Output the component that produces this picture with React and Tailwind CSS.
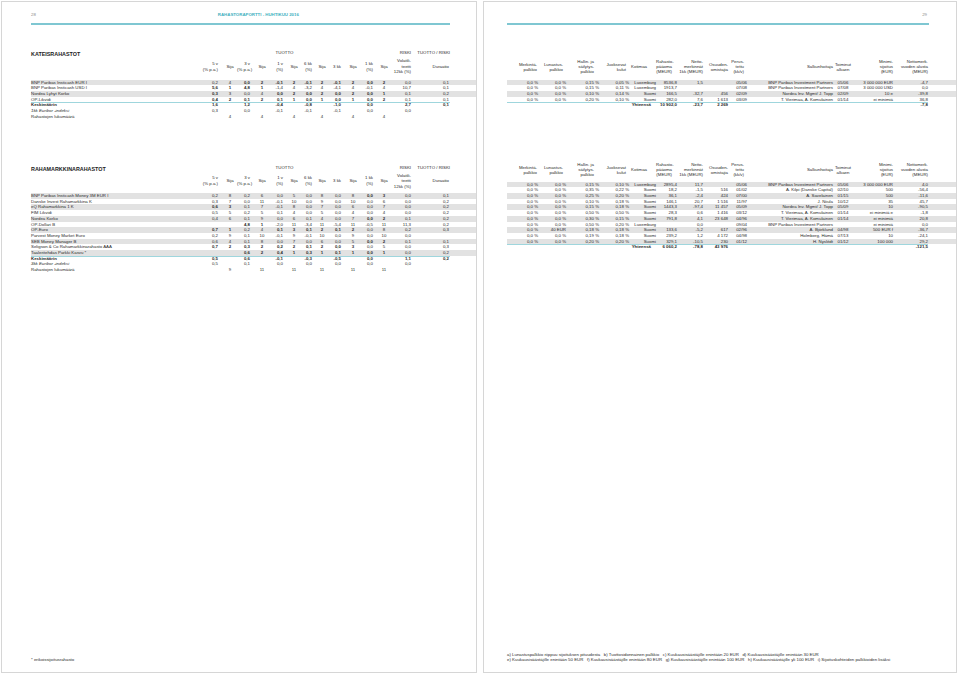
const L_GRID =
  'grid grid-cols-[171px_21px_14px_18px_14px_19px_12px_17px_10px_19px_14px_18px_12px_26px_34px]'
const R_GRID =
  'grid grid-cols-[31px_28px_33px_30px_27px_21px_26px_25px_19px_86px_20px_40px_35px]'

const Val = ({ v, className }) => {
  const bold = typeof v === 'string' && v.startsWith('*')
  const text = bold ? v.slice(1) : v
  return <div className={`${className} ${bold ? 'font-bold' : ''} whitespace-nowrap`}>{text}</div>
}

const fundsKateis = [
  ['BNP Paribas Insticash EUR I', '0,2', '4', '*0,0', '*2', '*-0,1', '*2', '*-0,1', '*2', '*-0,1', '*2', '*0,0', '*2', '0,0', '0,1'],
  ['BNP Paribas Insticash USD I', '*5,6', '*1', '*4,8', '*1', '-1,4', '4', '-3,2', '4', '-4,1', '4', '-0,1', '4', '10,7', '0,1'],
  ['Nordea Lyhyt Korko', '*0,3', '3', '0,0', '4', '*0,0', '*2', '*0,0', '*2', '*0,0', '*2', '*0,0', '*1', '0,1', '0,2'],
  ['OP-Likvidi', '*0,4', '*2', '*0,1', '*2', '*0,1', '*1', '*0,0', '*1', '*0,0', '*1', '*0,0', '*2', '0,1', '0,1'],
]
const sumKateis = [
  ['*Keskimäärin', '*1,6', '', '*1,2', '', '*-0,4', '', '*-0,8', '', '*-1,0', '', '*0,0', '', '*2,7', '*0,1'],
  ['1kk Euribor -indeksi', '0,3', '', '0,0', '', '-0,1', '', '-0,1', '', '-0,1', '', '0,0', '', '0,0', ''],
  ['Rahastojen lukumäärä', '', '4', '', '4', '', '4', '', '4', '', '4', '', '4', '', ''],
]

const fundsRaha = [
  ['BNP Paribas Insticash Money 3M EUR I', '0,2', '8', '0,2', '6', '0,0', '5', '0,0', '8', '0,0', '8', '*0,0', '*3', '0,0', '0,1'],
  ['Danske Invest Rahamarkkina K', '0,3', '7', '0,0', '11', '-0,1', '10', '0,0', '9', '0,0', '10', '0,0', '6', '0,0', '0,2'],
  ['eQ Rahamarkkina 1 K', '*0,6', '*3', '0,1', '7', '-0,1', '8', '0,0', '7', '0,0', '6', '0,0', '7', '0,0', '0,2'],
  ['FIM Likvidi', '0,5', '5', '0,2', '5', '0,1', '4', '0,0', '5', '0,0', '4', '0,0', '4', '0,0', '0,2'],
  ['Nordea Korko', '0,4', '6', '0,1', '9', '0,0', '6', '0,1', '4', '0,0', '7', '*0,0', '*2', '0,1', '0,2'],
  ['OP-Dollari B', '', '', '*4,8', '*1', '-2,0', '11', '-3,4', '11', '-5,4', '11', '-0,5', '11', '11,3', '0,2'],
  ['OP-Euro', '*0,7', '*1', '0,2', '4', '*0,1', '*3', '*0,1', '*2', '*0,1', '*2', '0,0', '8', '0,2', '0,3'],
  ['Parvest Money Market Euro', '0,2', '9', '0,1', '10', '-0,1', '9', '-0,1', '10', '0,0', '9', '0,0', '10', '0,0', ''],
  ['SEB Money Manager B', '0,6', '4', '0,1', '8', '0,0', '7', '0,0', '6', '0,0', '5', '*0,0', '*2', '0,1', '0,1'],
  ['Seligson & Co Rahamarkkinarahasto AAA', '*0,7', '*2', '*0,3', '*2', '*0,2', '*2', '*0,1', '*2', '*0,0', '*3', '0,0', '5', '0,0', '0,3'],
  ['Taaleritehdas Parkki Kasvu *', '', '', '*0,6', '*2', '*0,4', '*1', '*0,3', '*1', '*0,1', '*1', '*0,0', '*1', '0,0', '0,2'],
]
const sumRaha = [
  ['*Keskimäärin', '*0,5', '', '*0,6', '', '*-0,1', '', '*-0,3', '', '*-0,5', '', '*0,0', '', '*1,1', '*0,2'],
  ['3kk Euribor -indeksi', '0,5', '', '0,1', '', '0,0', '', '0,0', '', '0,0', '', '0,0', '', '0,0', ''],
  ['Rahastojen lukumäärä', '', '9', '', '11', '', '11', '', '11', '', '11', '', '11', '', ''],
]

const infoKateis = [
  ['0,0 %', '0,0 %', '0,15 %', '0,05 %', 'Luxemburg', '8536,8', '1,5', '', '05/06', 'BNP Paribas Investment Partners', '05/06', '3 000 000 EUR', '-4,7'],
  ['0,0 %', '0,0 %', '0,15 %', '0,11 %', 'Luxemburg', '1913,7', '', '', '07/08', 'BNP Paribas Investment Partners', '07/08', '3 000 000 USD', '0,0'],
  ['0,0 %', '0,0 %', '0,10 %', '0,14 %', 'Suomi', '166,5', '-32,7', '456', '02/09', 'Nordea Inv. Mgmt/ J. Topp', '02/09', '10 e', '-39,8'],
  ['0,0 %', '0,0 %', '0,20 %', '0,10 %', 'Suomi', '282,0', '7,6', '1 613', '03/09', 'T. Vierimaa, A. Komulainen', '01/14', 'ei minimiä', '36,8'],
]
const totKateis = ['', '', '', '', '*Yhteensä', '*10 902,0', '*-23,7', '*2 269', '', '', '', '', '*-7,8']

const infoRaha = [
  ['0,0 %', '0,0 %', '0,15 %', '0,10 %', 'Luxemburg', '2895,4', '11,7', '', '05/06', 'BNP Paribas Investment Partners', '05/06', '3 000 000 EUR', '4,0'],
  ['0,0 %', '0,0 %', '0,35 %', '0,22 %', 'Suomi', '18,2', '-1,5', '516', '01/02', 'A. Kilpi (Danske Capital)', '02/10', '500', '-56,4'],
  ['0,0 %', '0,0 %', '0,25 %', '0,20 %', 'Suomi', '36,1', '-2,4', '424', '07/00', 'A. Savelainen', '01/15', '500', '-11,6'],
  ['0,0 %', '0,0 %', '0,10 %', '0,18 %', 'Suomi', '146,1', '20,7', '1 516', '11/97', 'J. Niiula', '10/12', '35', '45,7'],
  ['0,0 %', '0,0 %', '0,15 %', '0,18 %', 'Suomi', '1443,3', '-97,4', '11 457', '05/09', 'Nordea Inv. Mgmt/ J. Topp', '05/09', '10', '-90,5'],
  ['0,0 %', '0,0 %', '0,50 %', '0,50 %', 'Suomi', '28,3', '0,6', '1 416', '03/12', 'T. Vierimaa, A. Komulainen', '01/14', 'ei minimiä e', '-1,8'],
  ['0,0 %', '0,0 %', '0,30 %', '0,15 %', 'Suomi', '791,8', '4,1', '23 648', '04/96', 'T. Vierimaa, A. Komulainen', '01/14', 'ei minimiä', '20,8'],
  ['0,0 %', '0,0 %', '0,50 %', '0,20 %', 'Luxemburg', '', '0,0', '', '09/04', 'BNP Paribas Investment Partners', '', 'ei minimiä', '0,0'],
  ['0,0 %', '40 EUR', '0,18 %', '0,18 %', 'Suomi', '133,6', '-5,2', '617', '02/96', 'A. Björklund', '04/98', '500 EUR f', '-36,7'],
  ['0,0 %', '0,0 %', '0,19 %', '0,18 %', 'Suomi', '239,2', '1,2', '4 172', '04/98', 'Holmberg, Hämä', '07/13', '10', '-24,1'],
  ['0,0 %', '0,0 %', '0,20 %', '0,20 %', 'Suomi', '329,1', '-10,5', '230', '01/12', 'H. Nyslédt', '01/12', '100 000', '29,2'],
]
const totRaha = ['', '', '', '', '*Yhteensä', '*6 060,2', '*-78,8', '*43 976', '', '', '', '', '*-121,5']

const lCell = (i) => {
  if (i === 0) return 'text-left'
  if (i === 14) return 'text-right pr-[1px]'
  if (i === 13) return 'text-right pr-[5px]'
  return i % 2 === 1 ? 'text-right pr-[5px]' : 'text-center'
}

const lHeads = [
  [], ['5 v', '(% p.a.)'], ['Sija'], ['3 v', '(% p.a.)'], ['Sija'], ['1 v', '(%)'], ['Sija'],
  ['6 kk', '(%)'], ['Sija'], ['3 kk'], ['Sija'], ['1 kk', '(%)'], ['Sija'],
  ['Volatili-', 'teetti', '12kk (%)'], ['Duraatio'],
]

const rHeads = [
  ['Merkintä-', 'palkkio'], ['Lunastus-', 'palkkio'], ['Hallin. ja', 'säilytys-', 'palkkio'],
  ['Juoksevat', 'kulut'], ['Kotimaa'], ['Rahasto-', 'pääoma', '(MEUR)'],
  ['Netto-', 'merkinnät', '1kk (MEUR)'], ['Osuuden-', 'omistajia'], ['Perus-', 'tettu', '(kk/v)'],
  ['Salkunhoitaja'], ['Toiminut', 'alkaen'], ['Minimi-', 'sijoitus', '(EUR)'],
  ['Nettomerk.', 'vuoden alusta', '(MEUR)'],
]
const rHeadPad = ['pr-[1px]', 'pr-[3px]', 'pr-[5px]', 'pr-[3px]', 'pr-[9px]', 'pr-[5px]', 'pr-0', 'pr-0', 'pr-[3px]', 'pr-0', 'pr-0', 'pr-0', 'pr-0']
const rCell = (i) => (i === 10 ? 'text-center' : 'text-right')

const LeftTable = ({ title, rows, sums, headH, topH }) => (
  <div>
    <div className={`${L_GRID} ${topH} items-center`}>
      <div className="text-[5.4px] font-bold text-[#222] leading-none translate-y-[1.5px]">{title}</div>
      <div className="col-start-3 col-span-8 text-center">TUOTTO</div>
      <div className="col-start-14 text-right pr-[5px]">RISKI</div>
      <div className="text-right pr-[0px] whitespace-nowrap">TUOTTO / RISKI</div>
    </div>
    <div className={`${L_GRID} ${headH} items-center leading-[5.5px]`}>
      {lHeads.map((h, i) => (
        <div key={i} className={lCell(i)}>
          {h.map((t, j) => (
            <div key={j} className="whitespace-nowrap">{t}</div>
          ))}
        </div>
      ))}
    </div>
    {rows.map((r, i) => (
      <div key={i} className={`${L_GRID} h-[5.7px] leading-[5.7px] ${i % 2 === 0 ? 'bg-[#e2e2e2]' : ''}`}>
        {r.map((v, j) => (
          <Val key={j} v={v} className={lCell(j)} />
        ))}
      </div>
    ))}
    <div className="w-[419px] h-[1px] bg-[#9fd6dd]" />
    {sums.map((r, i) => (
      <div key={i} className={`${L_GRID} h-[5.7px] leading-[5.7px] ${i === 0 ? '-mt-[1px]' : ''}`}>
        {r.map((v, j) => (
          <Val key={j} v={v} className={`${lCell(j)} ${i === 1 && j === 0 ? 'italic' : ''}`} />
        ))}
      </div>
    ))}
  </div>
)

const RightTable = ({ rows, total, headH, topH }) => (
  <div>
    <div className={topH} />
    <div className={`${R_GRID} ${headH} items-center leading-[5px]`}>
      {rHeads.map((h, i) => (
        <div key={i} className={`${rCell(i)} ${rHeadPad[i]}`}>
          {h.map((t, j) => (
            <div key={j} className="whitespace-nowrap">{t}</div>
          ))}
        </div>
      ))}
    </div>
    {rows.map((r, i) => (
      <div key={i} className={`${R_GRID} h-[5.7px] leading-[5.7px] ${i % 2 === 0 ? 'bg-[#e2e2e2]' : ''}`}>
        {r.map((v, j) => (
          <Val key={j} v={v} className={rCell(j)} />
        ))}
      </div>
    ))}
    <div className="w-[421px] h-[1px] bg-[#9fd6dd]" />
    <div className={`${R_GRID} h-[5.7px] leading-[5.7px] -mt-[1px]`}>
      {total.map((v, j) => (
        <Val key={j} v={v} className={`${rCell(j)} ${j === 4 ? 'pr-[5px]' : ''}`} />
      ))}
    </div>
  </div>
)

export default function App() {
  return (
    <div className="w-[960px] h-[674px] bg-white flex font-['Liberation_Sans',Arial,sans-serif] text-[4.35px] text-[#2a2a2a] overflow-hidden">
      {/* page 28 */}
      <div className="ml-[1px] mt-[1px] w-[476px] h-[672px] border border-[#d6d6d6] flex flex-col pl-[29px]">
        <div className="pt-[9.5px] flex items-center leading-[5px]">
          <span className="text-[#8a8a8a]">28</span>
          <span className="ml-[182px] font-bold text-[#3fb0c0]">RAHASTORAPORTTI - HUHTIKUU 2016</span>
        </div>
        <div className="mt-[6.5px] w-[419px] h-[1.5px] bg-[#7fc7d2]" />
        <div className="mt-[24.5px]">
          <LeftTable title="KATEISRAHASTOT" rows={fundsKateis} sums={sumKateis} topH="h-[8px]" headH="h-[19px] mb-[3.5px]" />
        </div>
        <div className="mt-[44.6px]">
          <LeftTable title="RAHAMARKKINARAHASTOT" rows={fundsRaha} sums={sumRaha} topH="h-[8px]" headH="h-[18px] mb-[3.2px]" />
        </div>
        <div className="mt-auto pb-[9.5px] leading-[5.5px]">* erikoissijoitusrahasto</div>
      </div>

      {/* page 29 */}
      <div className="ml-[6px] mt-[1px] w-[474px] h-[672px] border border-[#d6d6d6] flex flex-col pl-[23px]">
        <div className="pt-[9.5px] w-[421px] flex justify-end leading-[5px]">
          <span className="text-[#8a8a8a] pr-[1px]">29</span>
        </div>
        <div className="mt-[6.5px] w-[422px] h-[1.5px] bg-[#7fc7d2]" />
        <div className="mt-[24.5px]">
          <RightTable rows={infoKateis} total={totKateis} topH="h-[8px]" headH="h-[19px] mb-[3.5px]" />
        </div>
        <div className="mt-[44.6px]">
          <RightTable rows={infoRaha} total={totRaha} topH="h-[8px]" headH="h-[18px] mb-[3.2px]" />
        </div>
        <div className="mt-auto pb-[9.5px] leading-[5.5px] whitespace-nowrap">
          <div>
            a) Lunastuspalkkio riippuu sijoituksen pituudesta&nbsp;&nbsp; b) Tuottosidonnainen palkkio&nbsp;&nbsp; c) Kuukausisäästäjille enintään 20 EUR&nbsp;&nbsp; d) Kuukausisäästäjille enintään 30 EUR
          </div>
          <div>
            e) Kuukausisäästäjille enintään 50 EUR&nbsp;&nbsp; f) Kuukausisäästäjille enintään 80 EUR&nbsp;&nbsp; g) Kuukausisäästäjille enintään 100 EUR&nbsp;&nbsp; h) Kuukausisäästäjille yli 100 EUR&nbsp;&nbsp; i) Sijoituskohteiden palkkioiden lisäksi
          </div>
        </div>
      </div>
    </div>
  )
}
